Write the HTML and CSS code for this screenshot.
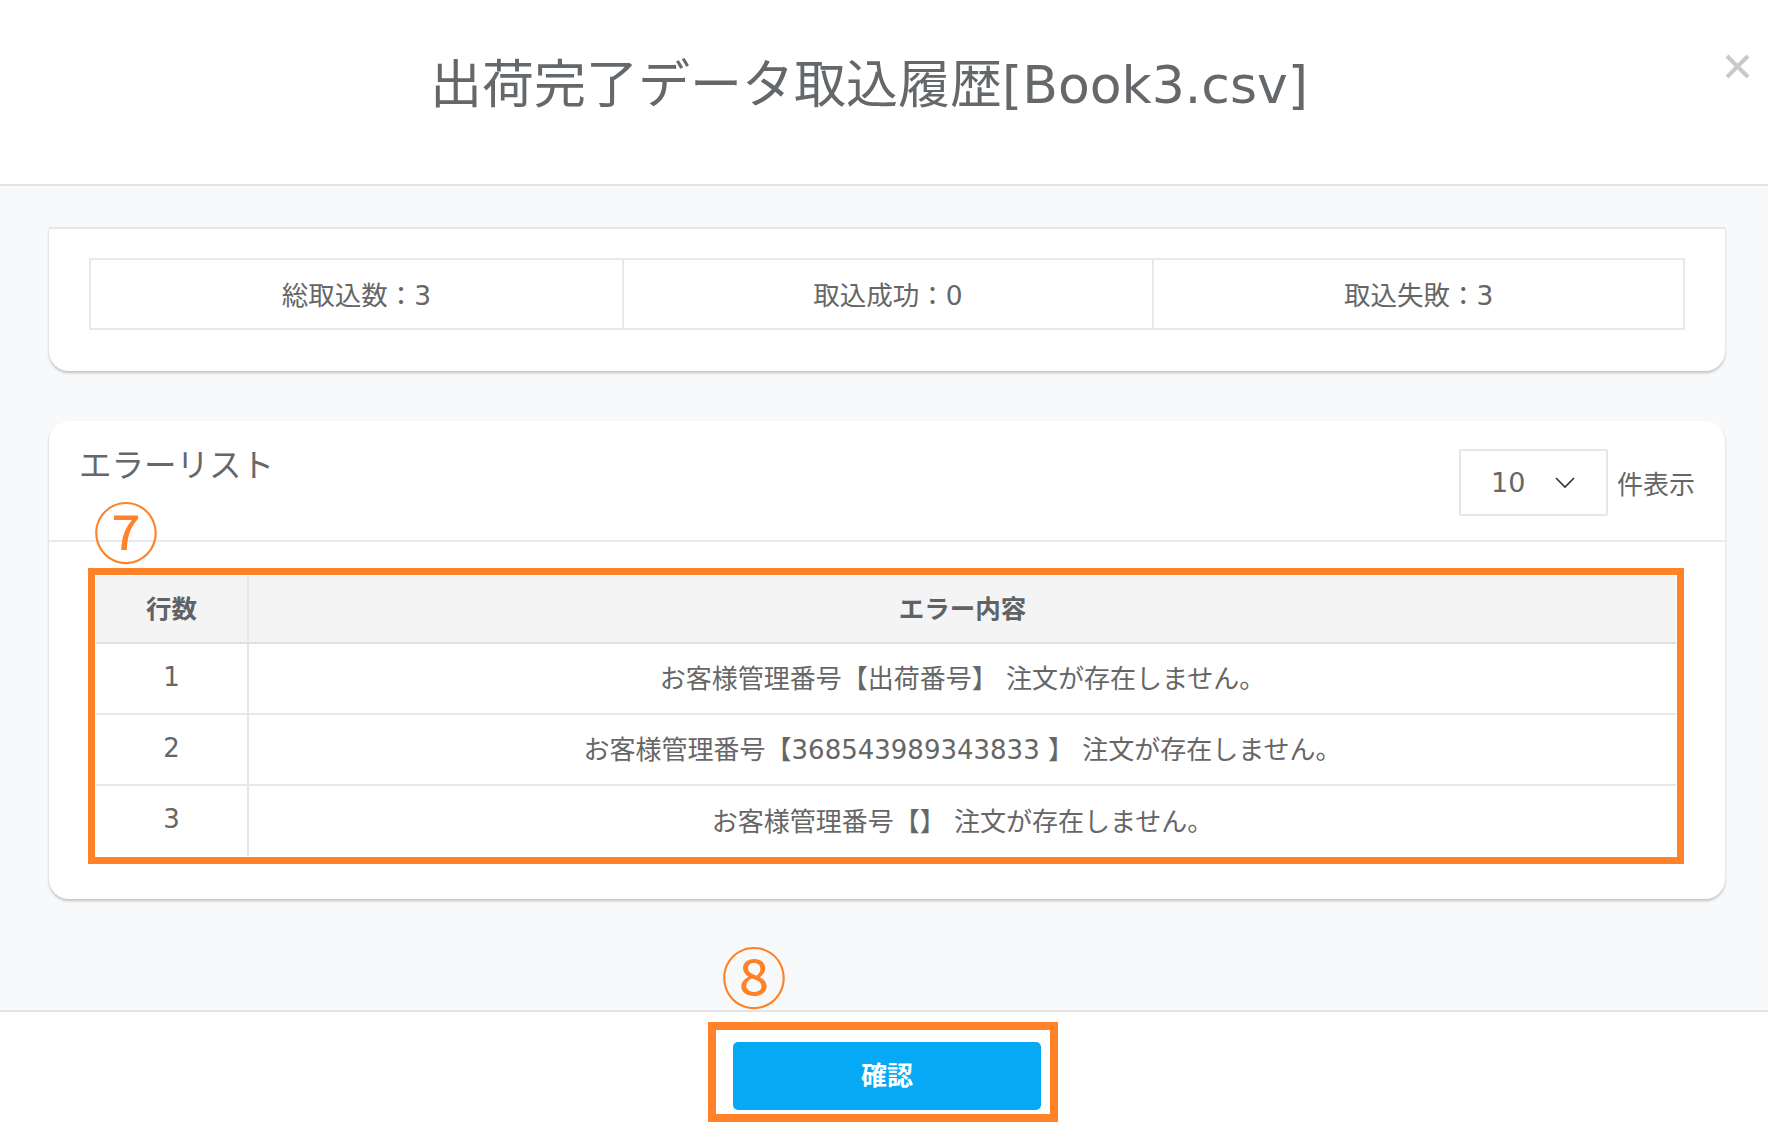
FILE: index.html
```html
<!DOCTYPE html>
<html lang="ja">
<head>
<meta charset="utf-8">
<title>出荷完了データ取込履歴</title>
<link rel="stylesheet" href="styles.css">
</head>
<body>
<div class="page">
  <header class="modal-header">
    <h1 class="modal-title">出荷完了データ取込履歴[Book3.csv]</h1>
    <button class="close-btn" aria-label="close">
      <svg width="25" height="25" viewBox="0 0 25 25"><path d="M2 2 L23 23 M23 2 L2 23" stroke="#c9c9c9" stroke-width="4" fill="none"/></svg>
    </button>
  </header>
  <main class="modal-body">
    <section class="card card-summary">
      <div class="stats">
        <div class="stat">総取込数：3</div>
        <div class="stat">取込成功：0</div>
        <div class="stat">取込失敗：3</div>
      </div>
    </section>
    <section class="card card-errors">
      <div class="errors-head">
        <h2 class="errors-title">エラーリスト</h2>
        <div class="per-page">
          <div class="select">
            <span class="select-value">10</span>
            <svg width="20" height="12" viewBox="0 0 20 12"><path d="M1 1 L10 10 L19 1" stroke="#333" stroke-width="1.6" fill="none"/></svg>
          </div>
          <span class="per-page-label">件表示</span>
        </div>
      </div>
      <span class="marker marker-7">⑦</span>
      <div class="highlight">
        <table class="error-table">
          <thead>
            <tr><th class="col-no">行数</th><th>エラー内容</th></tr>
          </thead>
          <tbody>
            <tr><td class="col-no">1</td><td>お客様管理番号【出荷番号】 注文が存在しません。</td></tr>
            <tr><td class="col-no">2</td><td>お客様管理番号【368543989343833 】 注文が存在しません。</td></tr>
            <tr><td class="col-no">3</td><td>お客様管理番号【】 注文が存在しません。</td></tr>
          </tbody>
        </table>
      </div>
    </section>
    <span class="marker marker-8">⑧</span>
  </main>
  <footer class="modal-footer">
    <div class="highlight-btn">
      <button class="confirm-btn">確認</button>
    </div>
  </footer>
</div>
</body>
</html>
```

FILE: styles.css
```css
* { box-sizing: border-box; }
html, body { margin: 0; padding: 0; }
body {
  width: 1768px;
  height: 1124px;
  overflow: hidden;
  font-family: "DejaVu Sans", "Noto Sans CJK JP", sans-serif;
  color: #666;
  background: #fff;
}
.page { display: flex; flex-direction: column; height: 1124px; }

.modal-header {
  position: relative;
  height: 186px;
  flex: none;
  border-bottom: 2px solid #e4e4e4;
  display: flex;
  align-items: center;
  justify-content: center;
  background: #fff;
}
.modal-title {
  margin: 0 30px 14px 0;
  font-size: 52px;
  font-weight: normal;
  color: #65686b;
  line-height: 1.2;
}
.close-btn {
  position: absolute;
  right: 18px;
  top: 54px;
  width: 25px;
  height: 25px;
  padding: 0;
  border: 0;
  background: none;
  display: flex;
}

.modal-body {
  position: relative;
  flex: 1;
  background: #f8f9fb;
  padding: 41px 43px 0 49px;
}
.card {
  background: #fff;
  box-shadow: 0 2px 3px rgba(0,0,0,0.22);
}
.card-summary {
  height: 144px;
  border-top: 2px solid #e4e6e8;
  border-radius: 0 0 20px 20px;
  padding: 29px 40px 0 40px;
}
.stats {
  display: grid;
  grid-template-columns: 1fr 1fr 1fr;
  height: 72px;
  border: 2px solid #e7e9ec;
}
.stat {
  display: flex;
  align-items: center;
  justify-content: center;
  font-size: 26.5px;
  color: #666;
  padding-bottom: 2px;
}
.stat + .stat { border-left: 2px solid #e7e9ec; }

.card-errors {
  position: relative;
  margin-top: 50px;
  border-radius: 20px;
  padding-bottom: 35px;
}
.errors-head {
  height: 121px;
  border-bottom: 2px solid #e8ebee;
  display: flex;
  justify-content: space-between;
  align-items: flex-start;
  padding: 0 30px 0 30px;
}
.errors-title {
  margin: 26px 0 0 0;
  font-size: 32.5px;
  font-weight: normal;
  color: #65686b;
  line-height: 38px;
}
.per-page {
  margin-top: 28px;
  display: flex;
  align-items: center;
  gap: 9px;
}
.select {
  width: 149px;
  height: 67px;
  border: 2px solid #e6e6e6;
  border-radius: 2px;
  display: flex;
  align-items: center;
  padding-left: 30px;
  gap: 30px;
}
.select-value { font-size: 27px; color: #666; }
.per-page-label { font-size: 26px; color: #666; }

.marker {
  position: absolute;
  font-family: "Noto Sans CJK JP", sans-serif;
  color: #ff8128;
  line-height: 1;
}
.marker-7 { left: 44px; top: 75px; font-size: 66px; }
.marker-8 { left: 721px; top: 755px; font-size: 66px; }

.highlight {
  margin: 26px 41px 0 39px;
  border: 7px solid #ff8128;
  padding: 1px;
}
.error-table {
  width: 100%;
  border-collapse: collapse;
  font-size: 26px;
  color: #666;
}
.error-table th {
  height: 67px;
  padding: 0 0 5px 0;
  background: #f4f4f4;
  font-weight: bold;
  font-size: 25.5px;
  color: #5f6366;
  border-bottom: 2px solid #e0e0e0;
  text-align: center;
}
.error-table td {
  height: 71px;
  padding: 0 0 4px 0;
  text-align: center;
  border-top: 2px solid #e8e8e8;
}
.error-table tr:first-child td { border-top: 0; }
.error-table .col-no {
  width: 152px;
  border-right: 2px solid #e6e6e6;
}

.modal-footer {
  height: 114px;
  flex: none;
  border-top: 2px solid #e4e4e4;
  background: #fff;
  display: flex;
  justify-content: center;
  padding-top: 10px;
}
.highlight-btn {
  width: 350px;
  height: 100px;
  border: 8px solid #ff8128;
  padding: 12px 9px 4px 17px;
  margin-left: -2px;
}
.confirm-btn {
  width: 308px;
  height: 68px;
  border: 0;
  border-radius: 5px;
  background: #05a9f4;
  color: #fff;
  font-family: "Noto Sans CJK JP", sans-serif;
  font-weight: bold;
  font-size: 26px;
  padding: 0 0 5px 0;
}
```
